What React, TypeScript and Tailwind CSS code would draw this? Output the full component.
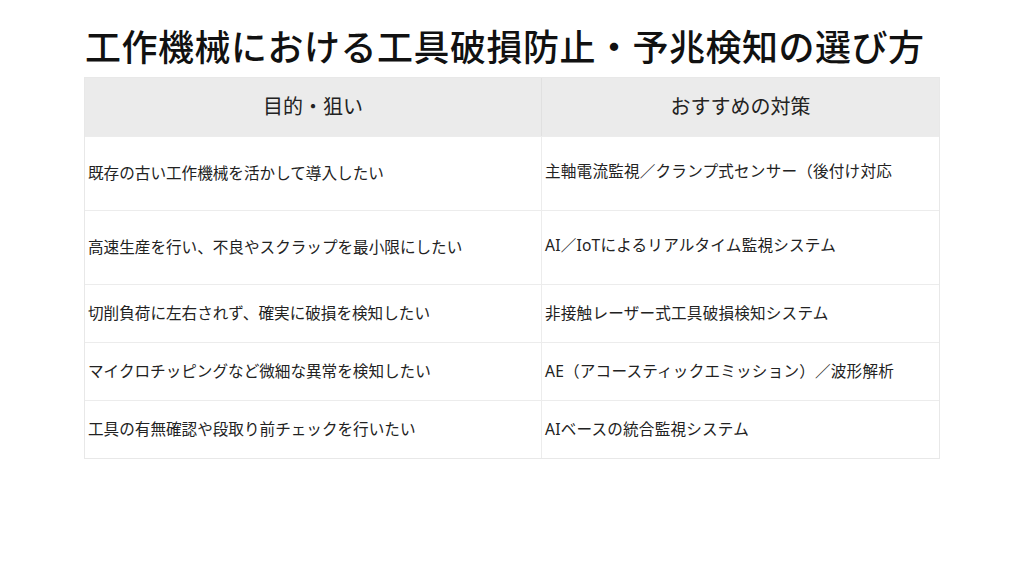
import React from "react";

const rows: { left: string; right: string; h: string }[] = [
  { left: "既存の古い工作機械を活かして導入したい", right: "主軸電流監視／クランプ式センサー（後付け対応", h: "h-[74px]" },
  { left: "高速生産を行い、不良やスクラップを最小限にしたい", right: "AI／IoTによるリアルタイム監視システム", h: "h-[74px]" },
  { left: "切削負荷に左右されず、確実に破損を検知したい", right: "非接触レーザー式工具破損検知システム", h: "h-[58px]" },
  { left: "マイクロチッピングなど微細な異常を検知したい", right: "AE（アコースティックエミッション）／波形解析", h: "h-[58px]" },
  { left: "工具の有無確認や段取り前チェックを行いたい", right: "AIベースの統合監視システム", h: "h-[58px]" },
];

export default function App() {
  return (
    <div
      className="w-[1024px] h-[576px] bg-white text-[#111]"
      style={{ fontFamily: '"Noto Sans", "Noto Sans CJK JP", sans-serif' }}
    >
      <div className="pl-[84px] pt-[26px]">
        <h1 className="text-[36px] leading-[44px] font-medium pl-[1px] tracking-[0.5px]">
          工作機械における工具破損防止・予兆検知の選び方
        </h1>
        <div className="mt-[7px] w-[856px] border border-[#e8e8e8]">
          <div className="flex h-[58px] bg-[#ebebeb] text-[20px] text-[#222]">
            <div className="w-[457px] flex items-center justify-center border-r border-[#e0e0e0]">
              目的・狙い
            </div>
            <div className="flex-1 flex items-center justify-center">おすすめの対策</div>
          </div>
          {rows.map((r, i) => (
            <div key={i} className={`flex ${r.h} border-t border-[#ececec] text-[15.6px] text-[#222]`}>
              <div className="w-[457px] flex items-center pl-[3px] border-r border-[#ececec]">{r.left}</div>
              <div className={`flex-1 flex items-center pl-[3px] tracking-[0.2px] ${i < 2 ? "pb-[4px]" : ""}`}>{r.right}</div>
            </div>
          ))}
        </div>
      </div>
    </div>
  );
}
